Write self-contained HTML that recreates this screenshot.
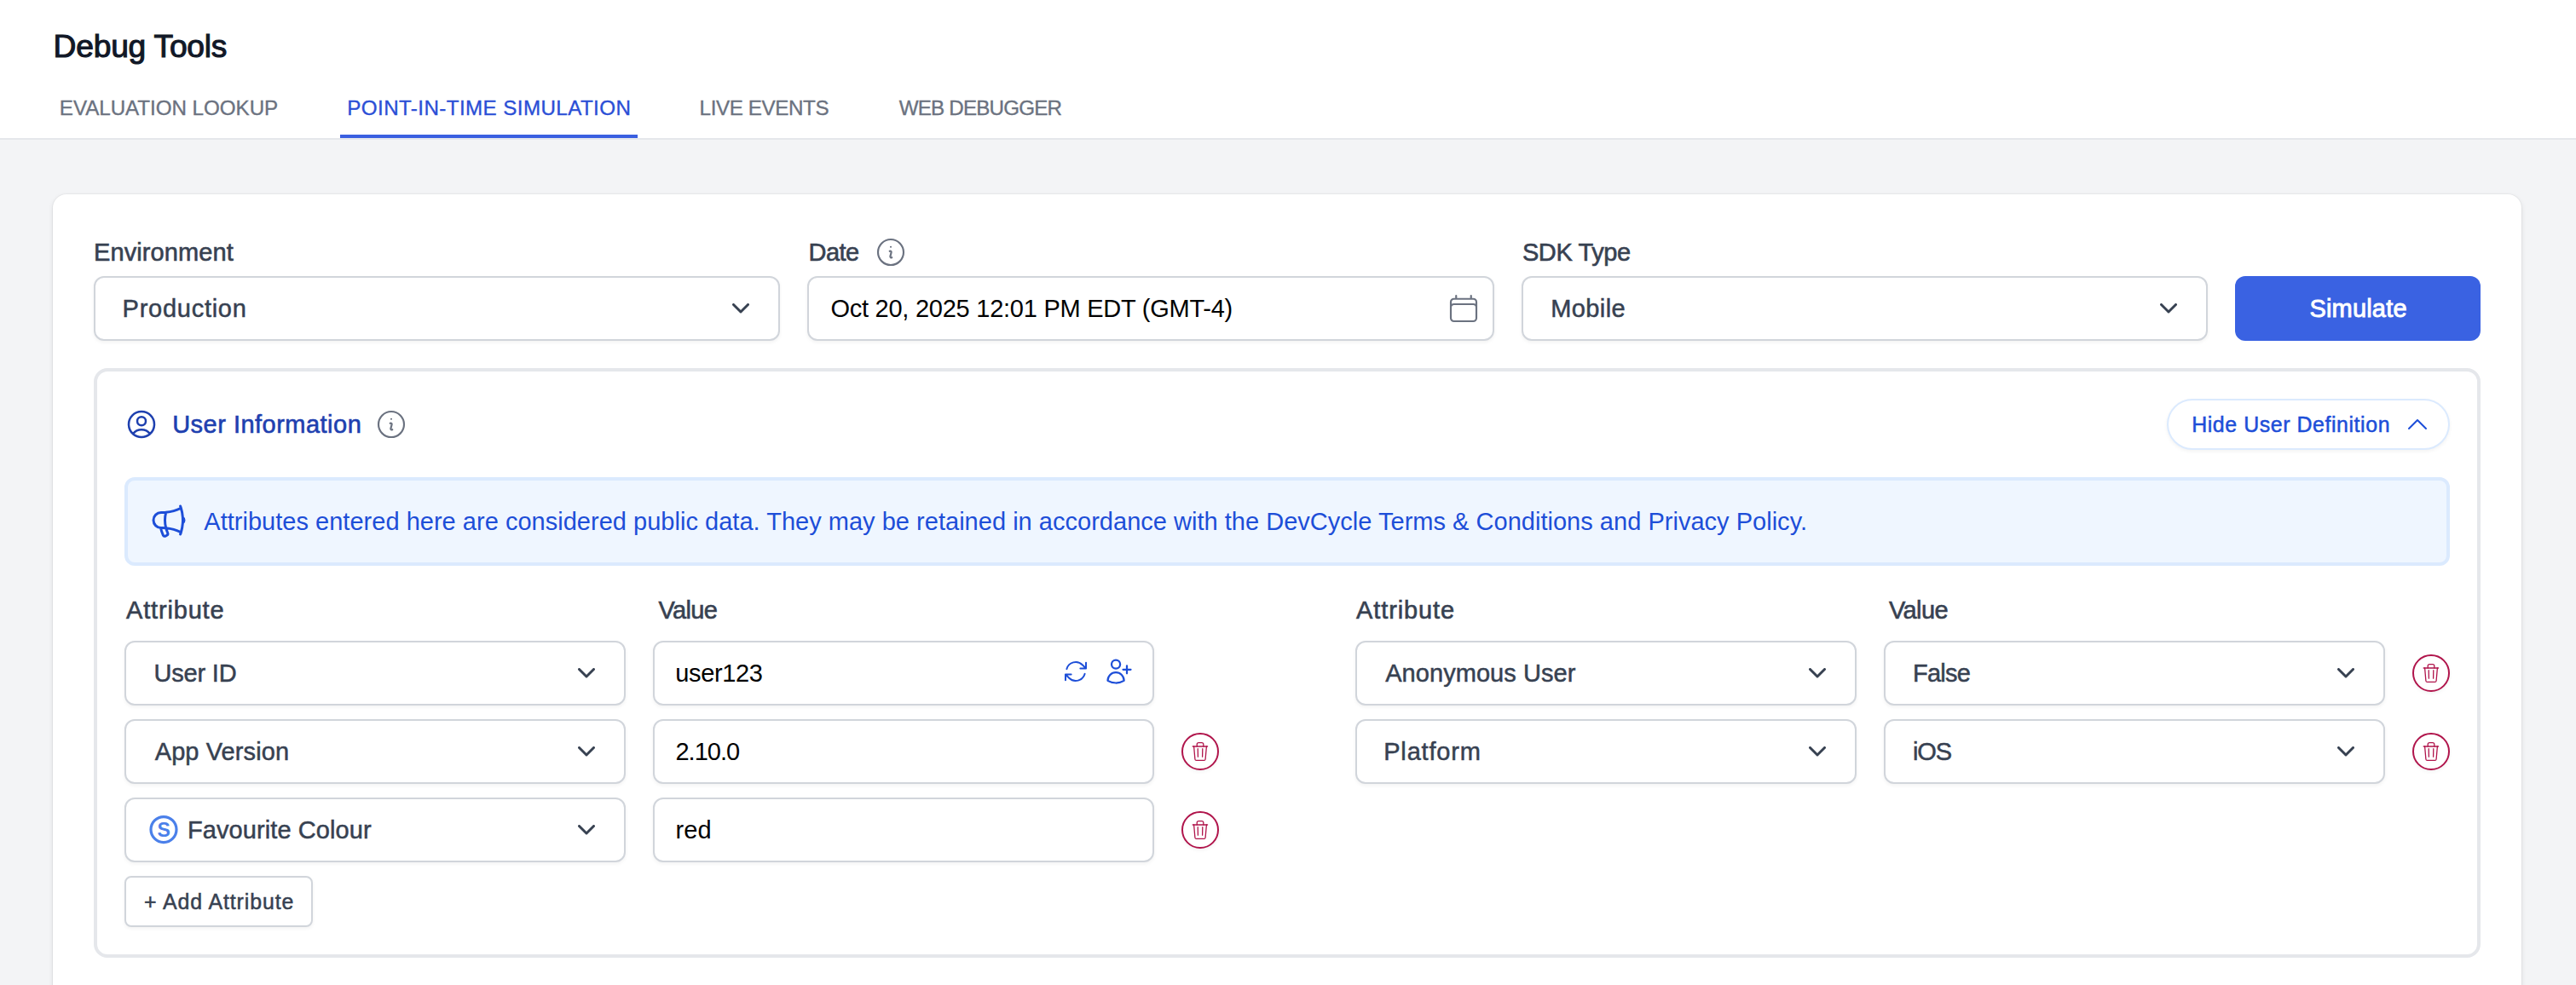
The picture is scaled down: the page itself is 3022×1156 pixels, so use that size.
<!DOCTYPE html>
<html><head><meta charset="utf-8">
<style>
html,body{margin:0;padding:0}
body{width:3022px;height:1156px;overflow:hidden;position:relative;background:#f3f4f6;font-family:"Liberation Sans",sans-serif;}
.a{position:absolute}
.t{position:absolute;white-space:nowrap;line-height:1}
#hdr{left:0;top:0;width:3022px;height:162px;background:#fff;border-bottom:2px solid #e5e7eb}
.tab{font-size:24.2px;color:#6b7280;-webkit-text-stroke:0.35px #6b7280}
#card{left:62px;top:228px;width:2896px;height:1000px;background:#fff;border-radius:16px;box-shadow:0 0 0 1px rgba(0,0,0,0.03),0 2px 6px rgba(0,0,0,0.09),0 2px 4px -2px rgba(0,0,0,0.06)}
.lbl{font-size:29px;color:#374151;-webkit-text-stroke:0.6px #374151}
.box{position:absolute;box-sizing:border-box;height:76px;border:2px solid #d1d5db;border-radius:12px;background:#fff;box-shadow:0 2px 4px rgba(0,0,0,0.05)}
.sel{font-size:29px;color:#374151;-webkit-text-stroke:0.5px #374151}
.inp{font-size:29px;color:#000}
.chev{position:absolute;width:20px;height:12px}
</style></head>
<body>
<div id="hdr" class="a"></div>
<div id="title" class="t" style="left:62.60px;top:36.20px;font-size:37.2px;color:#111827;-webkit-text-stroke:1.1px #111827;letter-spacing:-0.220px">Debug Tools</div>
<div id="tab1" class="t tab" style="left:69.80px;top:115.00px;letter-spacing:-0.049px">EVALUATION LOOKUP</div>
<div id="tab2" class="t tab" style="left:407.30px;top:115.00px;color:#2b4fd6;-webkit-text-stroke:0.35px #2b4fd6;letter-spacing:0.400px">POINT-IN-TIME SIMULATION</div>
<div id="tab3" class="t tab" style="left:820.60px;top:115.00px;letter-spacing:-0.400px">LIVE EVENTS</div>
<div id="tab4" class="t tab" style="left:1054.70px;top:115.00px;letter-spacing:-0.812px">WEB DEBUGGER</div>
<div class="a" style="left:399px;top:158px;width:349px;height:4px;background:#3a5fe0"></div>

<div id="card" class="a"></div>

<!-- top row -->
<div id="envL" class="t lbl" style="left:110.00px;top:282.00px;letter-spacing:0.100px">Environment</div>
<div class="box" style="left:110px;top:324px;width:805px"></div>
<div id="envV" class="t sel" style="left:143.60px;top:348.00px;letter-spacing:0.734px">Production</div>

<div id="dateL" class="t lbl" style="left:948.50px;top:281.90px;letter-spacing:-0.567px">Date</div>
<div class="box" style="left:947px;top:324px;width:806px"></div>
<div id="dateV" class="t inp" style="left:974.40px;top:347.70px;letter-spacing:-0.248px">Oct 20, 2025 12:01 PM EDT (GMT-4)</div>

<div id="sdkL" class="t lbl" style="left:1785.90px;top:282.30px;letter-spacing:-0.386px">SDK Type</div>
<div class="box" style="left:1785px;top:324px;width:805px"></div>
<div id="sdkV" class="t sel" style="left:1819.20px;top:347.70px;letter-spacing:0.400px">Mobile</div>

<div class="a" style="left:2622px;top:324px;width:288px;height:76px;background:#3a62e2;border-radius:12px"></div>
<div id="simB" class="t" style="left:2709.40px;top:348.00px;font-size:29px;color:#fff;-webkit-text-stroke:0.9px #fff;letter-spacing:0.186px">Simulate</div>

<!-- user info box -->
<div class="a" style="left:110px;top:432px;width:2800px;height:692px;box-sizing:border-box;border:4px solid #e5e7eb;border-radius:16px"></div>
<div id="uiT" class="t" style="left:202.20px;top:483.90px;font-size:29px;color:#1e40af;-webkit-text-stroke:0.6px #1e40af;letter-spacing:0.481px">User Information</div>

<div class="a" style="left:2542px;top:468px;width:332px;height:60px;box-sizing:border-box;border:2px solid #dbeafe;border-radius:30px;background:#fff;box-shadow:0 2px 4px rgba(0,0,0,0.05)"></div>
<div id="hideT" class="t" style="left:2571.20px;top:485.80px;font-size:24.9px;color:#1d4ed8;-webkit-text-stroke:0.5px #1d4ed8;letter-spacing:0.576px">Hide User Definition</div>

<div class="a" style="left:146px;top:560px;width:2728px;height:104px;box-sizing:border-box;border:4px solid #dbeafe;border-radius:12px;background:#eff6ff"></div>
<div id="banT" class="t" style="left:239.30px;top:598.00px;font-size:29px;color:#1d4ed8;letter-spacing:0.020px">Attributes entered here are considered public data. They may be retained in accordance with the DevCycle Terms &amp; Conditions and Privacy Policy.</div>

<!-- attribute labels -->
<div id="attL1" class="t lbl" style="left:148.00px;top:702.10px;letter-spacing:0.825px">Attribute</div>
<div id="valL1" class="t lbl" style="left:772.40px;top:701.90px;letter-spacing:-0.625px">Value</div>
<div id="attL2" class="t lbl" style="left:1591.10px;top:701.90px;letter-spacing:0.875px">Attribute</div>
<div id="valL2" class="t lbl" style="left:2216.00px;top:701.90px;letter-spacing:-0.625px">Value</div>

<!-- rows -->
<div class="box" style="left:146px;top:752px;width:588px"></div>
<div class="box" style="left:766px;top:752px;width:588px"></div>
<div class="box" style="left:1590px;top:752px;width:588px"></div>
<div class="box" style="left:2210px;top:752px;width:588px"></div>

<div class="box" style="left:146px;top:844px;width:588px"></div>
<div class="box" style="left:766px;top:844px;width:588px"></div>
<div class="box" style="left:1590px;top:844px;width:588px"></div>
<div class="box" style="left:2210px;top:844px;width:588px"></div>

<div class="box" style="left:146px;top:936px;width:588px"></div>
<div class="box" style="left:766px;top:936px;width:588px"></div>

<div class="a" style="left:146px;top:1028px;width:221px;height:60px;box-sizing:border-box;border:2px solid #d1d5db;border-radius:8px;background:#fff;box-shadow:0 2px 4px rgba(0,0,0,0.05)"></div>
<div id="addT" class="t" style="left:169.00px;top:1045.70px;font-size:24.9px;color:#374151;-webkit-text-stroke:0.5px #374151;letter-spacing:0.915px">+ Add Attribute</div>


<!-- icons top row -->
<svg class="a" style="left:859px;top:356px" width="20" height="13" viewBox="0 0 20 13"><polyline points="1.5,1.5 10,10 18.5,1.5" fill="none" stroke="#374151" stroke-width="3" stroke-linecap="round" stroke-linejoin="round"/></svg>
<svg class="a" style="left:2534px;top:356px" width="20" height="13" viewBox="0 0 20 13"><polyline points="1.5,1.5 10,10 18.5,1.5" fill="none" stroke="#374151" stroke-width="3" stroke-linecap="round" stroke-linejoin="round"/></svg>
<svg class="a" style="left:1697px;top:342px" width="40" height="40" viewBox="0 0 24 24" fill="none" stroke="#6b7280" stroke-width="1.3" stroke-linecap="round" stroke-linejoin="round"><path d="M6.75 3v2.25M17.25 3v2.25M3 18.75V7.5a2.25 2.25 0 0 1 2.25-2.25h13.5A2.25 2.25 0 0 1 21 7.5v11.25m-18 0A2.25 2.25 0 0 0 5.25 21h13.5A2.25 2.25 0 0 0 21 18.75m-18 0v-7.5A2.25 2.25 0 0 1 5.25 9h13.5A2.25 2.25 0 0 1 21 11.25v7.5"/></svg>
<svg class="a" style="left:1025px;top:276px" width="40" height="40" viewBox="0 0 24 24" fill="none" stroke="#6b7280" stroke-width="1.3" stroke-linecap="round" stroke-linejoin="round"><path d="m11.25 11.25.041-.02a.75.75 0 0 1 1.063.852l-.708 2.836a.75.75 0 0 0 1.063.853l.041-.021M21 12a9 9 0 1 1-18 0 9 9 0 0 1 18 0Zm-9-3.75h.008v.008H12V8.25Z"/></svg>

<!-- user info header icons -->
<svg class="a" style="left:146px;top:478px" width="40" height="40" viewBox="0 0 24 24" fill="none" stroke="#1e40af" stroke-width="1.5" stroke-linecap="round" stroke-linejoin="round"><path d="M17.982 18.725A7.5 7.5 0 0 0 12 15.75a7.5 7.5 0 0 0-5.982 2.975m11.964 0a9 9 0 1 0-11.963 0m11.963 0A8.966 8.966 0 0 1 12 21a8.966 8.966 0 0 1-5.982-2.275M15 9.75a3 3 0 1 1-6 0 3 3 0 0 1 6 0Z"/></svg>
<svg class="a" style="left:439px;top:478px" width="40" height="40" viewBox="0 0 24 24" fill="none" stroke="#6b7280" stroke-width="1.3" stroke-linecap="round" stroke-linejoin="round"><path d="m11.25 11.25.041-.02a.75.75 0 0 1 1.063.852l-.708 2.836a.75.75 0 0 0 1.063.853l.041-.021M21 12a9 9 0 1 1-18 0 9 9 0 0 1 18 0Zm-9-3.75h.008v.008H12V8.25Z"/></svg>
<svg class="a" style="left:2820px;top:482px" width="32" height="32" viewBox="0 0 24 24" fill="none" stroke="#1d4ed8" stroke-width="1.5" stroke-linecap="round" stroke-linejoin="round"><path d="m4.5 15.75 7.5-7.5 7.5 7.5"/></svg>
<svg class="a" style="left:174px;top:588px" width="48" height="48" viewBox="0 0 24 24" fill="none" stroke="#1d4ed8" stroke-width="1.5" stroke-linecap="round" stroke-linejoin="round"><path d="M10.34 15.84c-.688-.06-1.386-.09-2.09-.09H7.5a4.5 4.5 0 1 1 0-9h.75c.704 0 1.402-.03 2.09-.09m0 9.18c.253.962.584 1.892.985 2.783.247.55.06 1.21-.463 1.511l-.657.38c-.551.318-1.26.117-1.527-.461a20.845 20.845 0 0 1-1.44-4.282m3.102.069a18.03 18.03 0 0 1-.59-4.59c0-1.586.205-3.124.59-4.59m0 9.18a23.848 23.848 0 0 1 8.835 2.535M10.34 6.66a23.847 23.847 0 0 0 8.835-2.535m0 0A23.74 23.74 0 0 0 18.795 3m.38 1.125a23.91 23.91 0 0 1 1.014 5.395m-1.014 8.855c-.118.38-.245.754-.38 1.125m.38-1.125a23.91 23.91 0 0 0 1.014-5.395m0-3.46c.495.413.811 1.035.811 1.73 0 .695-.316 1.317-.811 1.73m0-3.46a24.347 24.347 0 0 1 0 3.46"/></svg>

<!-- row texts -->
<div id="r1a" class="t sel" style="left:180.40px;top:776.20px;letter-spacing:-0.183px">User ID</div>
<div id="r1v" class="t inp" style="left:792.30px;top:775.60px;letter-spacing:-0.383px">user123</div>
<div id="r1ra" class="t sel" style="left:1625.20px;top:776.40px;letter-spacing:0.059px">Anonymous User</div>
<div id="r1rv" class="t sel" style="left:2244.00px;top:776.20px;letter-spacing:-0.750px">False</div>
<div id="r2a" class="t sel" style="left:181.70px;top:868.20px;letter-spacing:0.100px">App Version</div>
<div id="r2v" class="t inp" style="left:792.40px;top:868.20px;letter-spacing:-0.960px">2.10.0</div>
<div id="r2ra" class="t sel" style="left:1623.20px;top:868.20px;letter-spacing:0.831px">Platform</div>
<div id="r2rv" class="t sel" style="left:2244.00px;top:868.20px;letter-spacing:-1.150px">iOS</div>
<div id="r3a" class="t sel" style="left:219.90px;top:960.20px;letter-spacing:0.093px">Favourite Colour</div>
<div id="r3v" class="t inp" style="left:792.40px;top:960.20px;letter-spacing:0.100px">red</div>

<!-- S icon -->
<svg class="a" style="left:174px;top:955px" width="36" height="37" viewBox="0 0 36 37"><circle cx="18" cy="18.6" r="15" fill="none" stroke="#4b80ea" stroke-width="3.2"/></svg>
<div id="sT" class="t" style="left:184.5px;top:963.3px;font-size:23px;font-weight:bold;color:#4b80ea">S</div>

<!-- refresh + user plus -->
<svg class="a" style="left:1246px;top:772px" width="32" height="32" viewBox="0 0 24 24" fill="none" stroke="#1d4ed8" stroke-width="1.5" stroke-linecap="round" stroke-linejoin="round"><path d="M16.023 9.348h4.992v-.001M2.985 19.644v-4.992m0 0h4.992m-4.993 0 3.181 3.183a8.25 8.25 0 0 0 13.803-3.7M4.031 9.865a8.25 8.25 0 0 1 13.803-3.7l3.181 3.182m0-4.991v4.99"/></svg>
<svg class="a" style="left:1295px;top:770px" width="36" height="36" viewBox="0 0 24 24" fill="none" stroke="#1d4ed8" stroke-width="1.5" stroke-linecap="round" stroke-linejoin="round"><path d="M18 7.5v3m0 0v3m0-3h3m-3 0h-3m-2.25-4.125a3.375 3.375 0 1 1-6.75 0 3.375 3.375 0 0 1 6.75 0ZM3 19.235v-.11a6.375 6.375 0 0 1 12.75 0v.109A12.318 12.318 0 0 1 9.374 21c-2.331 0-4.512-.645-6.374-1.766Z"/></svg>
<svg class="a" style="left:678px;top:784px" width="20" height="13" viewBox="0 0 20 13"><polyline points="1.5,1.5 10,10 18.5,1.5" fill="none" stroke="#374151" stroke-width="3" stroke-linecap="round" stroke-linejoin="round"/></svg>
<svg class="a" style="left:678px;top:876px" width="20" height="13" viewBox="0 0 20 13"><polyline points="1.5,1.5 10,10 18.5,1.5" fill="none" stroke="#374151" stroke-width="3" stroke-linecap="round" stroke-linejoin="round"/></svg>
<svg class="a" style="left:678px;top:968px" width="20" height="13" viewBox="0 0 20 13"><polyline points="1.5,1.5 10,10 18.5,1.5" fill="none" stroke="#374151" stroke-width="3" stroke-linecap="round" stroke-linejoin="round"/></svg>
<svg class="a" style="left:2122px;top:784px" width="20" height="13" viewBox="0 0 20 13"><polyline points="1.5,1.5 10,10 18.5,1.5" fill="none" stroke="#374151" stroke-width="3" stroke-linecap="round" stroke-linejoin="round"/></svg>
<svg class="a" style="left:2742px;top:784px" width="20" height="13" viewBox="0 0 20 13"><polyline points="1.5,1.5 10,10 18.5,1.5" fill="none" stroke="#374151" stroke-width="3" stroke-linecap="round" stroke-linejoin="round"/></svg>
<svg class="a" style="left:2122px;top:876px" width="20" height="13" viewBox="0 0 20 13"><polyline points="1.5,1.5 10,10 18.5,1.5" fill="none" stroke="#374151" stroke-width="3" stroke-linecap="round" stroke-linejoin="round"/></svg>
<svg class="a" style="left:2742px;top:876px" width="20" height="13" viewBox="0 0 20 13"><polyline points="1.5,1.5 10,10 18.5,1.5" fill="none" stroke="#374151" stroke-width="3" stroke-linecap="round" stroke-linejoin="round"/></svg>
<div class="a" style="left:2830px;top:768px;width:44px;height:44px;border-radius:50%;background:#fff;box-shadow:0 2px 4px rgba(0,0,0,0.05)"></div>
<svg class="a trash" style="left:2830px;top:768px" width="44" height="44" viewBox="0 0 44 44" fill="none" stroke="#b0144b" stroke-linecap="round" stroke-linejoin="round"><circle cx="22" cy="22" r="21" stroke-width="2"/><g stroke-width="1.3"><path d="M13.2 16H30.6"/><path d="M18.2 16V13.6Q18.2 11.6 20.2 11.6H23.8Q25.8 11.6 25.8 13.6V16"/><path d="M14.6 16L15.9 31Q16.1 32.4 17.5 32.4H26.5Q27.9 32.4 28.1 31L29.4 16"/><path d="M19.2 18.7L19.4 28.2M24.8 18.7L24.6 28.2"/></g></svg>
<div class="a" style="left:1386px;top:860px;width:44px;height:44px;border-radius:50%;background:#fff;box-shadow:0 2px 4px rgba(0,0,0,0.05)"></div>
<svg class="a trash" style="left:1386px;top:860px" width="44" height="44" viewBox="0 0 44 44" fill="none" stroke="#b0144b" stroke-linecap="round" stroke-linejoin="round"><circle cx="22" cy="22" r="21" stroke-width="2"/><g stroke-width="1.3"><path d="M13.2 16H30.6"/><path d="M18.2 16V13.6Q18.2 11.6 20.2 11.6H23.8Q25.8 11.6 25.8 13.6V16"/><path d="M14.6 16L15.9 31Q16.1 32.4 17.5 32.4H26.5Q27.9 32.4 28.1 31L29.4 16"/><path d="M19.2 18.7L19.4 28.2M24.8 18.7L24.6 28.2"/></g></svg>
<div class="a" style="left:2830px;top:860px;width:44px;height:44px;border-radius:50%;background:#fff;box-shadow:0 2px 4px rgba(0,0,0,0.05)"></div>
<svg class="a trash" style="left:2830px;top:860px" width="44" height="44" viewBox="0 0 44 44" fill="none" stroke="#b0144b" stroke-linecap="round" stroke-linejoin="round"><circle cx="22" cy="22" r="21" stroke-width="2"/><g stroke-width="1.3"><path d="M13.2 16H30.6"/><path d="M18.2 16V13.6Q18.2 11.6 20.2 11.6H23.8Q25.8 11.6 25.8 13.6V16"/><path d="M14.6 16L15.9 31Q16.1 32.4 17.5 32.4H26.5Q27.9 32.4 28.1 31L29.4 16"/><path d="M19.2 18.7L19.4 28.2M24.8 18.7L24.6 28.2"/></g></svg>
<div class="a" style="left:1386px;top:952px;width:44px;height:44px;border-radius:50%;background:#fff;box-shadow:0 2px 4px rgba(0,0,0,0.05)"></div>
<svg class="a trash" style="left:1386px;top:952px" width="44" height="44" viewBox="0 0 44 44" fill="none" stroke="#b0144b" stroke-linecap="round" stroke-linejoin="round"><circle cx="22" cy="22" r="21" stroke-width="2"/><g stroke-width="1.3"><path d="M13.2 16H30.6"/><path d="M18.2 16V13.6Q18.2 11.6 20.2 11.6H23.8Q25.8 11.6 25.8 13.6V16"/><path d="M14.6 16L15.9 31Q16.1 32.4 17.5 32.4H26.5Q27.9 32.4 28.1 31L29.4 16"/><path d="M19.2 18.7L19.4 28.2M24.8 18.7L24.6 28.2"/></g></svg>
</body></html>
